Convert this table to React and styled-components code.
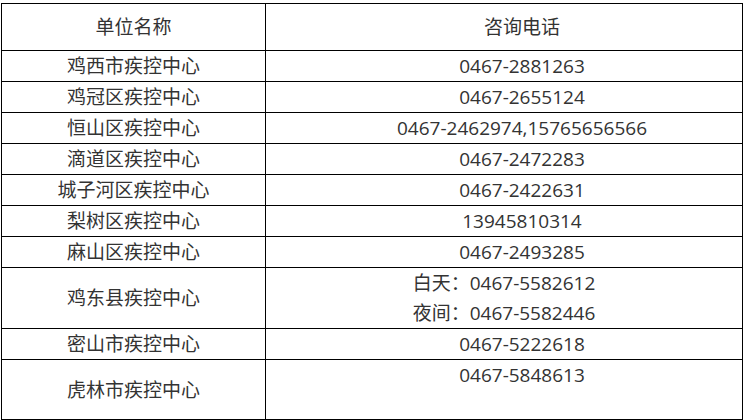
import React from 'react'
import styled, {createGlobalStyle} from 'styled-components'

const GlobalStyle = createGlobalStyle`
  body {
    margin: 0;
    background: #fff;
  }
`

const Wrap = styled.div`
  padding: 3px 0 0 1px;
`

const Table = styled.table`
  width: 742px;
  border-collapse: collapse;
  table-layout: fixed;
  font-family: 'Open Sans', 'Noto Sans CJK SC', sans-serif;
  font-size: 19px;
  color: #333;
`

const Col = styled.col`
  width: ${p => p.$width || 'auto'};
`

const Cell = styled.td`
  border: 1px solid #000;
  padding: ${p => (p.$head ? '8px' : '0')} 0 ${p => (p.$head ? '8px' : '0')} ${p => (p.$shift ? '36px' : '0')};
  font-weight: 400;
  line-height: 30px;
  text-align: center;
  vertical-align: middle;
  white-space: nowrap;
`

const Line = styled.div`
  height: ${p => (p.$empty ? '29px' : '30px')};
`

const rows = [
  ['鸡西市疾控中心', ['0467-2881263']],
  ['鸡冠区疾控中心', ['0467-2655124']],
  ['恒山区疾控中心', ['0467-2462974,15765656566']],
  ['滴道区疾控中心', ['0467-2472283']],
  ['城子河区疾控中心', ['0467-2422631']],
  ['梨树区疾控中心', ['13945810314']],
  ['麻山区疾控中心', ['0467-2493285']],
  ['鸡东县疾控中心', ['白天：0467-5582612', '夜间：0467-5582446'], true],
  ['密山市疾控中心', ['0467-5222618']],
  ['虎林市疾控中心', ['0467-5848613', '']],
]

const App = () => (
  <Wrap>
    <GlobalStyle />
    <Table>
      <colgroup>
        <Col $width="264px" />
        <Col />
      </colgroup>
      <thead>
        <tr>
          <Cell as="th" $head>单位名称</Cell>
          <Cell as="th" $head $shift>咨询电话</Cell>
        </tr>
      </thead>
      <tbody>
        {rows.map(([name, phones, centered]) => (
          <tr key={name}>
            <Cell>{name}</Cell>
            <Cell $shift={!centered}>
              {phones.map((p, i) => (
                <Line key={i} $empty={!p}>{p}</Line>
              ))}
            </Cell>
          </tr>
        ))}
      </tbody>
    </Table>
  </Wrap>
)

export default App
